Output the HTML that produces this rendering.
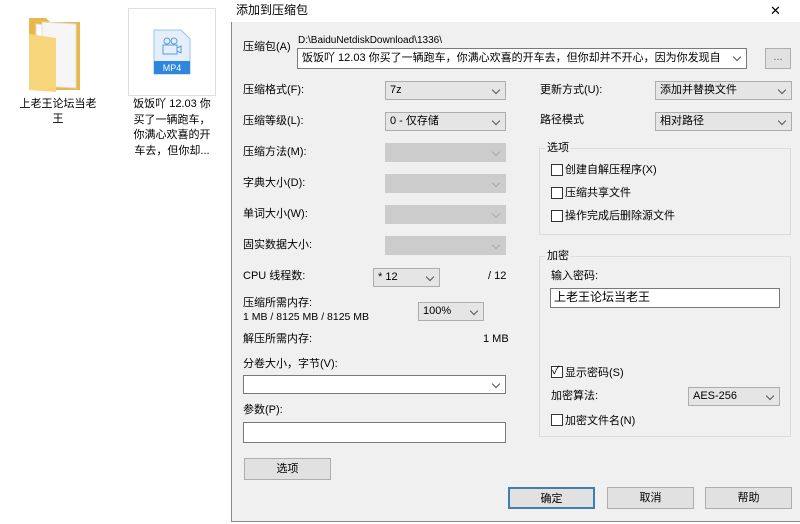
<!DOCTYPE html>
<html><head><meta charset="utf-8"><style>
*{margin:0;padding:0;box-sizing:border-box}
body{width:800px;height:524px;background:#fff;position:relative;overflow:hidden;font-family:"Liberation Sans","Microsoft YaHei","Noto Sans CJK SC",sans-serif;font-size:11px;color:#000}
.a{position:absolute;white-space:nowrap;line-height:13px}
.dlg{position:absolute;left:231px;top:0;width:569px;height:522px;background:#f0f0f0;border-left:1px solid #888;border-bottom:1px solid #888}
.tb{position:absolute;left:231px;top:0;width:569px;height:22px;background:#fff}
.sel{position:absolute;background:#e5e5e5;border:1px solid #adadad;height:19px;padding-left:4px;line-height:17px}
.sel.w{background:#fff;border-color:#7a7a7a}
.sel.d{background:#ccc;border-color:#ccc}
.sel:after{content:"";position:absolute;right:6px;top:5px;width:5px;height:5px;border-right:1px solid #555;border-bottom:1px solid #555;transform:rotate(45deg)}
.sel.d:after{border-color:#aaa}
.inp{position:absolute;background:#fff;border:1px solid #7a7a7a}
.btn{position:absolute;background:#e1e1e1;border:1px solid #adadad;text-align:center;line-height:20px;height:22px}
.grp{position:absolute;border:1px solid #dcdcdc}
.cb{position:absolute;width:12px;height:12px;border:1px solid #333;background:#fff}
</style></head><body>
<svg class="a" style="left:26px;top:14px" width="58" height="78" viewBox="0 0 58 78">
<path d="M3 4 L20 4 L24 8 L54 8 L54 76 L3 76 Z" fill="#e8b84a"/>
<path d="M10 10 L44 14 L44 72 L10 70 Z" fill="#fff" stroke="#ddd"/>
<path d="M16 8 L50 10 L50 74 L16 72 Z" fill="#f6f6f6" stroke="#ddd"/>
<path d="M3 20 L30 24 L30 78 L3 76 Z" fill="#f7d57a"/>
</svg>
<div class="a" style="left:19px;top:97px;width:78px;text-align:center;white-space:normal;line-height:15px">上老王论坛当老王</div>
<div class="a" style="left:128px;top:8px;width:88px;height:88px;border:1px solid #ddd"></div>
<svg class="a" style="left:153px;top:29px" width="38" height="46" viewBox="0 0 38 46">
<path d="M1 1 L28 1 L37 10 L37 45 L1 45 Z" fill="#e4effa" stroke="#9cc2e8"/>
<rect x="1" y="32" width="36" height="13" fill="#2e86de"/>
<text x="19" y="42" font-size="9" fill="#fff" text-anchor="middle" font-family="Liberation Sans">MP4</text>
<circle cx="14" cy="12" r="3" fill="none" stroke="#5a9ae0"/><circle cx="21" cy="12" r="3" fill="none" stroke="#5a9ae0"/>
<rect x="10" y="16" width="14" height="9" fill="none" stroke="#5a9ae0"/><path d="M24 19 L28 17 L28 24 L24 22" fill="none" stroke="#5a9ae0"/>
</svg>
<div class="a" style="left:132px;top:97px;width:80px;text-align:center;white-space:normal;line-height:15.5px">饭饭吖 12.03 你买了一辆跑车，你满心欢喜的开车去，但你却...</div>
<div class="dlg"></div>
<div class="tb"></div>
<div class="a" style="left:236px;top:4px;font-size:12px">添加到压缩包</div>
<div class="a" style="left:770px;top:4px;font-size:13px">✕</div>
<div class="a" style="left:243px;top:41px">压缩包(A)</div>
<div class="a" style="left:298px;top:34px;font-size:10px">D:\BaiduNetdiskDownload\1336\</div>
<div class="sel w" style="left:297px;top:48px;width:450px;height:21px;line-height:19px;overflow:hidden;padding-right:18px">饭饭吖 12.03 你买了一辆跑车，你满心欢喜的开车去，但你却并不开心，因为你发现自己</div>
<div class="btn" style="left:765px;top:48px;width:26px;height:21px;line-height:16px;color:#666">...</div>

<div class="a" style="left:243px;top:84px">压缩格式(F):</div><div class="sel" style="left:385px;top:81px;width:121px">7z</div>
<div class="a" style="left:243px;top:115px">压缩等级(L):</div><div class="sel" style="left:385px;top:112px;width:121px">0 - 仅存储</div>
<div class="a" style="left:243px;top:146px">压缩方法(M):</div><div class="sel d" style="left:385px;top:143px;width:121px"></div>
<div class="a" style="left:243px;top:177px">字典大小(D):</div><div class="sel d" style="left:385px;top:174px;width:121px"></div>
<div class="a" style="left:243px;top:208px">单词大小(W):</div><div class="sel d" style="left:385px;top:205px;width:121px"></div>
<div class="a" style="left:243px;top:239px">固实数据大小:</div><div class="sel d" style="left:385px;top:236px;width:121px"></div>
<div class="a" style="left:243px;top:270px">CPU 线程数:</div><div class="sel" style="left:373px;top:268px;width:67px">* 12</div>
<div class="a" style="left:488px;top:270px">/ 12</div>
<div class="a" style="left:243px;top:297px">压缩所需内存:</div>
<div class="a" style="left:243px;top:311px;font-size:10.5px">1 MB / 8125 MB / 8125 MB</div>
<div class="sel" style="left:418px;top:302px;width:66px">100%</div>
<div class="a" style="left:243px;top:333px">解压所需内存:</div>
<div class="a" style="left:483px;top:333px">1 MB</div>
<div class="a" style="left:243px;top:358px">分卷大小，字节(V):</div>
<div class="sel w" style="left:243px;top:375px;width:263px"></div>
<div class="a" style="left:243px;top:404px">参数(P):</div>
<div class="inp" style="left:243px;top:422px;width:263px;height:21px"></div>
<div class="btn" style="left:244px;top:458px;width:87px">选项</div>

<div class="a" style="left:540px;top:84px">更新方式(U):</div><div class="sel" style="left:655px;top:81px;width:137px">添加并替换文件</div>
<div class="a" style="left:540px;top:114px">路径模式</div><div class="sel" style="left:655px;top:112px;width:137px">相对路径</div>

<div class="grp" style="left:539px;top:148px;width:252px;height:87px"></div>
<div class="a" style="left:545px;top:142px;background:#f0f0f0;padding:0 2px">选项</div>
<div class="cb" style="left:551px;top:164px"></div><div class="a" style="left:565px;top:164px">创建自解压程序(X)</div>
<div class="cb" style="left:551px;top:187px"></div><div class="a" style="left:565px;top:187px">压缩共享文件</div>
<div class="cb" style="left:551px;top:210px"></div><div class="a" style="left:565px;top:210px">操作完成后删除源文件</div>

<div class="grp" style="left:539px;top:256px;width:252px;height:181px"></div>
<div class="a" style="left:545px;top:250px;background:#f0f0f0;padding:0 2px">加密</div>
<div class="a" style="left:551px;top:270px">输入密码:</div>
<div class="inp" style="left:550px;top:288px;width:230px;height:20px;padding-left:3px;line-height:17px;font-size:12px">上老王论坛当老王</div>
<div class="cb" style="left:551px;top:366px"></div><div class="a" style="left:552px;top:365px">✓</div>
<div class="a" style="left:565px;top:367px">显示密码(S)</div>
<div class="a" style="left:551px;top:390px">加密算法:</div>
<div class="sel" style="left:688px;top:387px;width:92px">AES-256</div>
<div class="cb" style="left:551px;top:414px"></div><div class="a" style="left:565px;top:415px">加密文件名(N)</div>

<div class="btn" style="left:508px;top:487px;width:87px;border:2px solid #3c7fb1">确定</div>
<div class="btn" style="left:607px;top:487px;width:87px">取消</div>
<div class="btn" style="left:705px;top:487px;width:87px">帮助</div>
</body></html>
